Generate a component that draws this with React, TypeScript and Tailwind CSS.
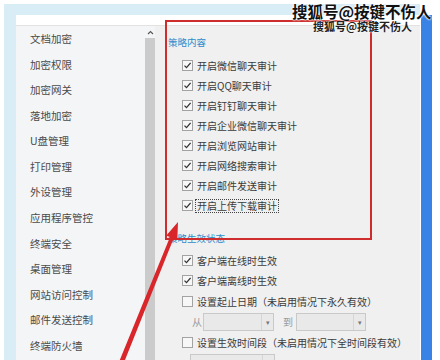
import React from "react";

const navItems = [
  "文档加密",
  "加密权限",
  "加密网关",
  "落地加密",
  "U盘管理",
  "打印管理",
  "外设管理",
  "应用程序管控",
  "终端安全",
  "桌面管理",
  "网站访问控制",
  "邮件发送控制",
  "终端防火墙",
];

const auditItems = [
  "开启微信聊天审计",
  "开启QQ聊天审计",
  "开启钉钉聊天审计",
  "开启企业微信聊天审计",
  "开启浏览网站审计",
  "开启网络搜索审计",
  "开启邮件发送审计",
  "开启上传下载审计",
];

function Check({ checked }: { checked: boolean }) {
  return (
    <span className="flex h-[11px] w-[11px] shrink-0 items-center justify-center border border-[#a3a3a3] bg-[#f7f7f7]">
      {checked && (
        <svg width="9" height="9" viewBox="0 0 9 9" aria-hidden="true">
          <path d="M1.5 4.6 L3.5 6.6 L7.6 1.8" fill="none" stroke="#333" strokeWidth="1.3" />
        </svg>
      )}
    </span>
  );
}

function Row({ label, checked, focus }: { label: string; checked: boolean; focus?: boolean }) {
  return (
    <div className="flex h-[20.1px] items-center gap-[2px] pl-[27px]">
      <Check checked={checked} />
      <span
        className={
          focus
            ? "border border-dotted border-[#444] px-[1px] leading-[12px] text-[10px] text-[#3a3a3a]"
            : "px-[2px] text-[10px] text-[#3a3a3a]"
        }
      >
        {label}
      </span>
    </div>
  );
}

function Select({ width }: { width: string }) {
  return (
    <div className={`flex h-[18px] items-center justify-end border border-[#c9c9c9] bg-[#e9e9e9] ${width}`}>
      <span className="flex h-full w-[12px] items-center justify-center border-l border-[#d6d6d6] text-[7px] text-[#777]">
        ▾
      </span>
    </div>
  );
}

export default function App() {
  return (
    <div className="relative h-[360px] w-[440px] overflow-hidden bg-white font-['Noto_Sans_CJK_SC',sans-serif]">
      <div className="flex pl-[4px] pt-[4px]">
        {/* light blue window frame */}
        <div className="flex h-[356px] w-[416px] flex-col bg-[#d9edf6] pl-[12px] pt-[11px]">
          <div className="flex flex-1 flex-col bg-white">
            <div className="h-[11px] border-b border-[#e2e2e2] bg-white" />
            <div className="flex flex-1">
              {/* left nav */}
              <div className="flex w-[129px] flex-col bg-[#f4f5f7] pl-[14px]">
                {navItems.map((n) => (
                  <div key={n} className="flex h-[25.6px] items-center text-[10.5px] text-[#4a4a4a]">
                    {n}
                  </div>
                ))}
              </div>
              {/* scrollbar */}
              <div className="flex w-[10px] flex-col bg-[#ececec]">
                <div className="flex h-[12px] items-center justify-center bg-[#f4f5f7]">
                  <svg width="7" height="5" viewBox="0 0 7 5" aria-hidden="true">
                    <path d="M1 4 L3.5 1.5 L6 4" fill="none" stroke="#555" strokeWidth="1.1" />
                  </svg>
                </div>
                <div className="flex-1 bg-[#cbcbcb]" />
              </div>
              {/* content */}
              <div className="flex flex-1 flex-col bg-[#f0f0f0]">
                <div className="mt-[9px] flex h-[14px] items-center pl-[13px] text-[9.5px] text-[#2b8ccd]">
                  策略内容
                </div>
                <div className="mt-[6px] flex flex-col">
                  {auditItems.map((a, i) => (
                    <Row key={a} label={a} checked focus={i === auditItems.length - 1} />
                  ))}
                </div>
                <div className="mt-[15px] flex h-[14px] items-center pl-[13px] text-[9.5px] text-[#2b8ccd]">
                  策略生效状态
                </div>
                <div className="mt-[5px] flex flex-col">
                  <div className="flex h-[20.5px] items-center gap-[2px] pl-[27px]">
                    <Check checked />
                    <span className="px-[2px] text-[10px] text-[#3a3a3a]">客户端在线时生效</span>
                  </div>
                  <div className="flex h-[20.5px] items-center gap-[2px] pl-[27px]">
                    <Check checked />
                    <span className="px-[2px] text-[10px] text-[#3a3a3a]">客户端离线时生效</span>
                  </div>
                  <div className="flex h-[20.5px] items-center gap-[2px] pl-[27px]">
                    <Check checked={false} />
                    <span className="px-[2px] text-[10px] text-[#3a3a3a]">设置起止日期（未启用情况下永久有效）</span>
                  </div>
                  <div className="flex h-[21px] items-center pl-[37px] text-[10px] text-[#999]">
                    <span className="w-[11px] shrink-0">从</span>
                    <Select width="w-[71px]" />
                    <span className="ml-[9px] w-[13px] shrink-0">到</span>
                    <Select width="w-[70px]" />
                  </div>
                  <div className="flex h-[20.5px] items-center gap-[2px] pl-[27px]">
                    <Check checked={false} />
                    <span className="px-[2px] text-[10px] text-[#3a3a3a]">设置生效时间段（未启用情况下全时间段有效）</span>
                  </div>
                  <div className="mt-[1px] pl-[35px]">
                    <Select width="w-[85px]" />
                  </div>
                </div>
              </div>
            </div>
          </div>
        </div>
        {/* blue side bar */}
        <div className="ml-[1px] mt-[11px] h-[345px] w-[11px] bg-[#3a83e6]" />
      </div>

      {/* red highlight box */}
      <div className="absolute left-[165px] top-[20px] h-[220px] w-[207px] border-2 border-[#cf2d2d]" />

      {/* red arrow */}
      <svg className="absolute left-0 top-0" width="440" height="360" viewBox="0 0 440 360" aria-hidden="true">
        <polygon
          points="178,222 177.3,240 173.6,238.5 124.2,362 119.8,360 170,236.9 166.3,235.4"
          fill="#d8262a"
        />
      </svg>

      {/* watermark */}
      <div className="absolute left-[292px] top-[2px] text-[15.5px] font-bold leading-[18px] text-[#111] [text-shadow:0_0_2px_#fff,0_0_2px_#fff,0_0_2px_#fff]">
        搜狐号@按键不伤人
      </div>
      <div className="absolute left-[313px] top-[20px] text-[11px] font-bold leading-[13px] text-[#222] [text-shadow:0_0_2px_#fff,0_0_2px_#fff]">
        搜狐号@按键不伤人
      </div>
    </div>
  );
}
